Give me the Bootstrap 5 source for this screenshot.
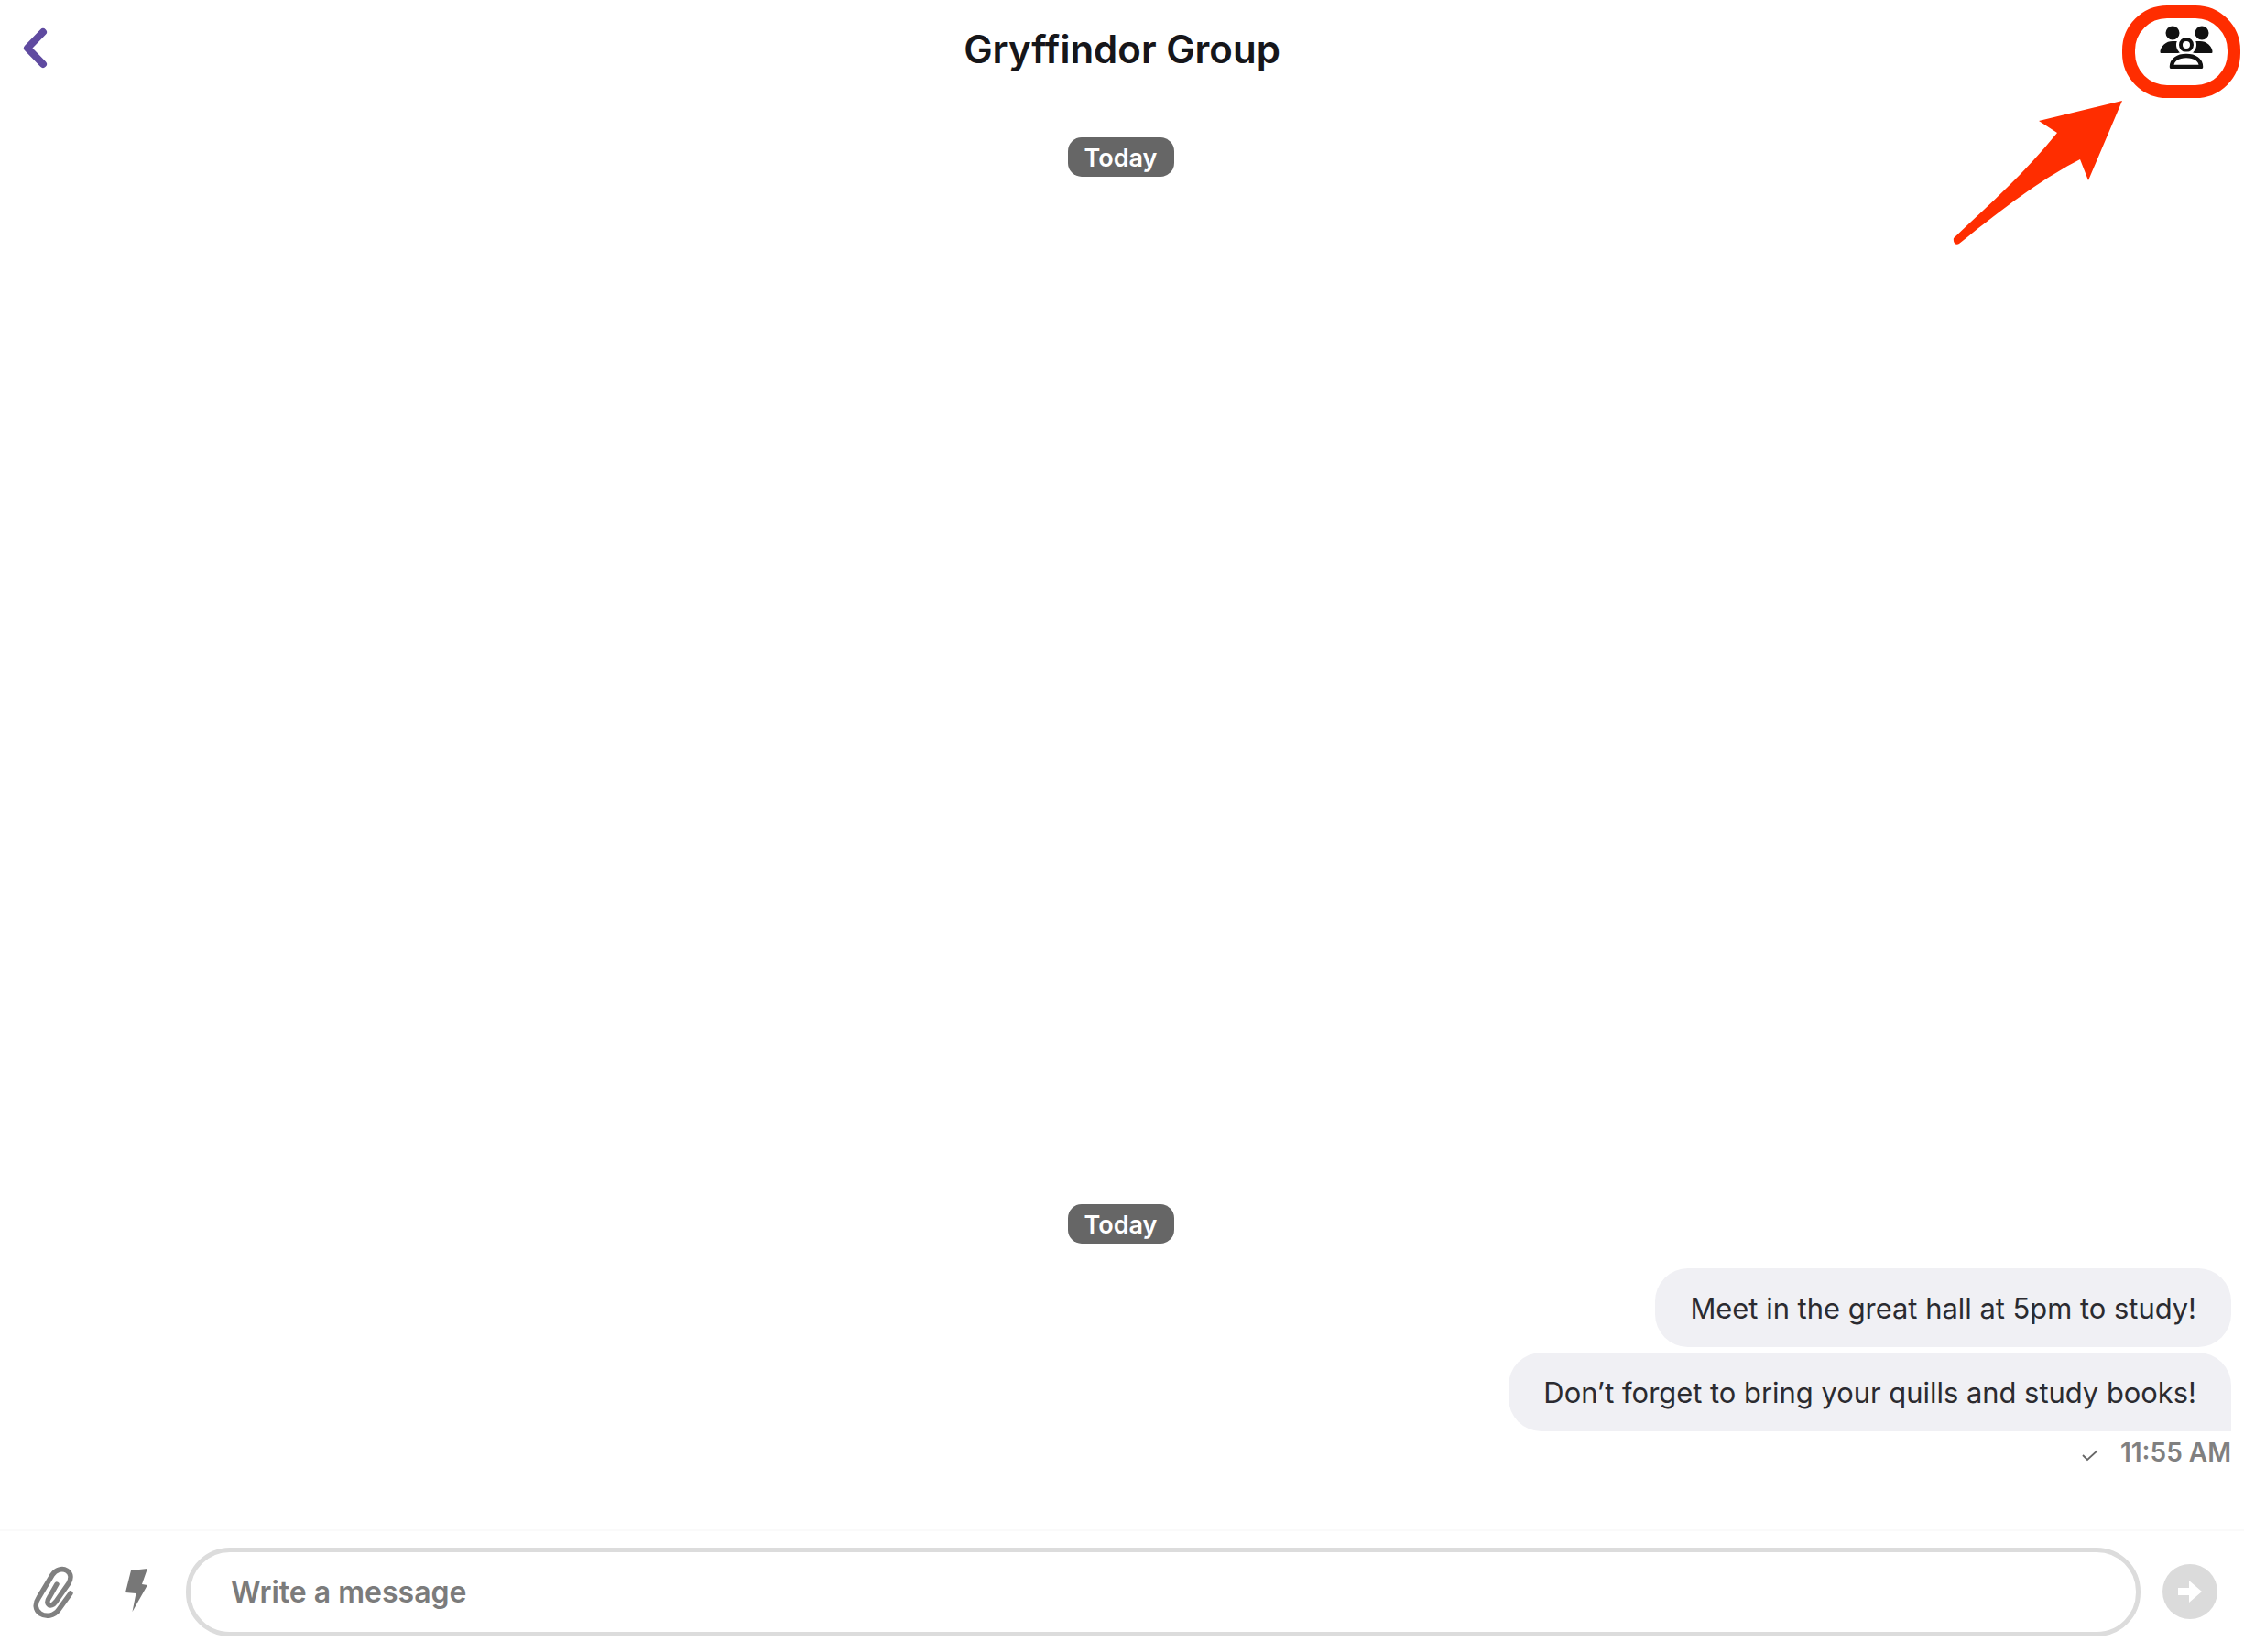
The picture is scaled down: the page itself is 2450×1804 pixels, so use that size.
<!DOCTYPE html>
<html>
  <head>
    <title>Gryffindor Group</title>
    <link href="https://cdn.jsdelivr.net/npm/bootstrap@5.3.3/dist/css/bootstrap.min.css" rel="stylesheet" />
    <style>
      body { background: #fff; font-family: "Inter", "Liberation Sans", sans-serif; overflow: hidden; }
      .chat-page { height: 1804px; position: relative; }
      .chat-head { height: 108px; }
      .head-side { flex: 1 1 0; }
      .back-link { margin-left: 24px; margin-top: 3px; }
      .chat-title { font-size: 42px; font-weight: 600; line-height: 1; color: #16161a; margin: 0; }
      .group-icon { margin-right: 34px; margin-top: -6px; }
      .chat-body { padding: 42px 14px 0 0; }
      .pill-row { padding-left: 11px; }
      .day-pill { background: #666; color: #fff; font-size: 27px; font-weight: 600; line-height: 45px; width: 116px; height: 43px; border-radius: 15px; }
      .day-last { margin-bottom: 27px; margin-left: 11px; }
      .msg-bubble { background: #f0f0f4; color: #2b2b30; font-size: 30.900px; line-height: 88px; height: 86px; padding: 0 38px; border-radius: 36px; }
      .msg-first { margin-bottom: 6px; }
      .msg-last { border-bottom-right-radius: 0; }
      .msg-meta { color: #808080; font-size: 28px; font-weight: 600; line-height: 1; margin-top: 9px; margin-bottom: 70px; }
      .tick-icon { margin-top: 5px; }
      .chat-foot { height: 134px; border-top: 2px solid #fafafa; padding: 18px 29px 0 36px; }
      .clip-icon { margin-top: 20px; }
      .bolt-icon { margin-top: 23px; margin-left: 55px; }
      .msg-input { width: 2137px; height: 97px; margin-left: 42px; border: 5px solid #dcdcdc; border-radius: 48px; padding: 0 44px; color: #7b7b7b; font-size: 32px; font-weight: 600; }
      .send-btn { width: 60px; height: 60px; margin-left: 24px; margin-top: 18px; background: #dbdbdb; }
      .mark-over { position: absolute; top: 0; left: 0; pointer-events: none; }
    </style>
  </head>
  <body>
    <div class="chat-page d-flex flex-column">
      <header class="chat-head d-flex align-items-center">
        <div class="head-side">
          <a class="d-inline-block back-link" href="#">
            <svg class="d-block" width="32" height="48" viewBox="0 0 32 48"><path d="M23 6 6 23.500 23 41" fill="none" stroke="#5f4aa0" stroke-width="8" stroke-linecap="round" stroke-linejoin="round"/></svg>
          </a>
        </div>
        <h1 class="chat-title">Gryffindor Group</h1>
        <div class="head-side d-flex justify-content-end">
          <a class="d-inline-block group-icon" href="#">
            <svg class="d-block" width="58" height="47" viewBox="0 0 58 47">
              <circle cx="14" cy="8" r="7.500" fill="#111"/>
              <circle cx="46" cy="8" r="7.500" fill="#111"/>
              <path d="M1.500 29c0-6 6-11 12.500-11h30c6.500 0 12.500 5 12.500 11z" fill="#111" stroke="#111" stroke-width="2" stroke-linejoin="round"/>
              <circle cx="29" cy="21" r="11" fill="#fff"/>
              <circle cx="29" cy="21" r="6" fill="#fff" stroke="#111" stroke-width="4"/>
              <path d="M13 45c0-8 7-12 16-12s16 4 16 12z" fill="#fff" stroke="#fff" stroke-width="9" stroke-linejoin="round"/>
              <path d="M13 45c0-8 7-12 16-12s16 4 16 12z" fill="#fff" stroke="#111" stroke-width="4.500" stroke-linejoin="round"/>
            </svg>
          </a>
        </div>
      </header>

      <main class="chat-body flex-grow-1 d-flex flex-column">
        <div class="d-flex justify-content-center pill-row">
          <div class="day-pill text-center">Today</div>
        </div>
        <div class="mt-auto d-flex flex-column align-items-end">
          <div class="align-self-center day-pill text-center day-last">Today</div>
          <div class="msg-bubble msg-first">Meet in the great hall at 5pm to study!</div>
          <div class="msg-bubble msg-last">Don’t forget to bring your quills and study books!</div>
          <div class="msg-meta d-flex align-items-center gap-4">
            <svg class="tick-icon" width="18" height="14" viewBox="0 0 18 14"><path d="M1 7l5 5L17 2" fill="none" stroke="#666" stroke-width="1.800"/></svg>
            <span>11:55 AM</span>
          </div>
        </div>
      </main>

      <footer class="chat-foot d-flex align-items-start">
        <svg class="clip-icon" width="46" height="58" viewBox="0 0 46 58">
          <path d="M41 30 28 48C23 55 14 56 8 52 2 48 2 41 6 35L21 10C25 4 32 2 37 5 42 8 42 14 39 19L25 39C22 43 19 44 17 42 15 40 16 37 18 34L26 20" fill="none" stroke="#808080" stroke-width="5.500" stroke-linecap="round"/>
        </svg>
        <svg class="bolt-icon" width="24" height="48" viewBox="0 0 24 48">
          <path d="M6 2 24 0 18 17 24 18 7.500 47 11.500 27 0 26z" fill="#777"/>
        </svg>
        <div class="msg-input d-flex align-items-center">Write a message</div>
        <div class="send-btn rounded-circle d-flex align-items-center justify-content-center">
          <svg width="30" height="30" viewBox="0 0 30 30"><path d="M2 11h12V3l14 12-14 12v-8H2z" fill="#fff"/></svg>
        </div>
      </footer>

      <svg class="mark-over" width="2450" height="300" viewBox="0 0 2450 300">
        <rect x="2324" y="13" width="115" height="87" rx="42" fill="none" stroke="#ff2d00" stroke-width="14"/>
        <path d="M2317 110 2226 132 2246 145C2210 190 2170 225 2133 260 2132 266 2136 268 2139 266 2190 225 2230 195 2271 174L2280 197z" fill="#ff2d00"/>
      </svg>
    </div>
  </body>
</html>
